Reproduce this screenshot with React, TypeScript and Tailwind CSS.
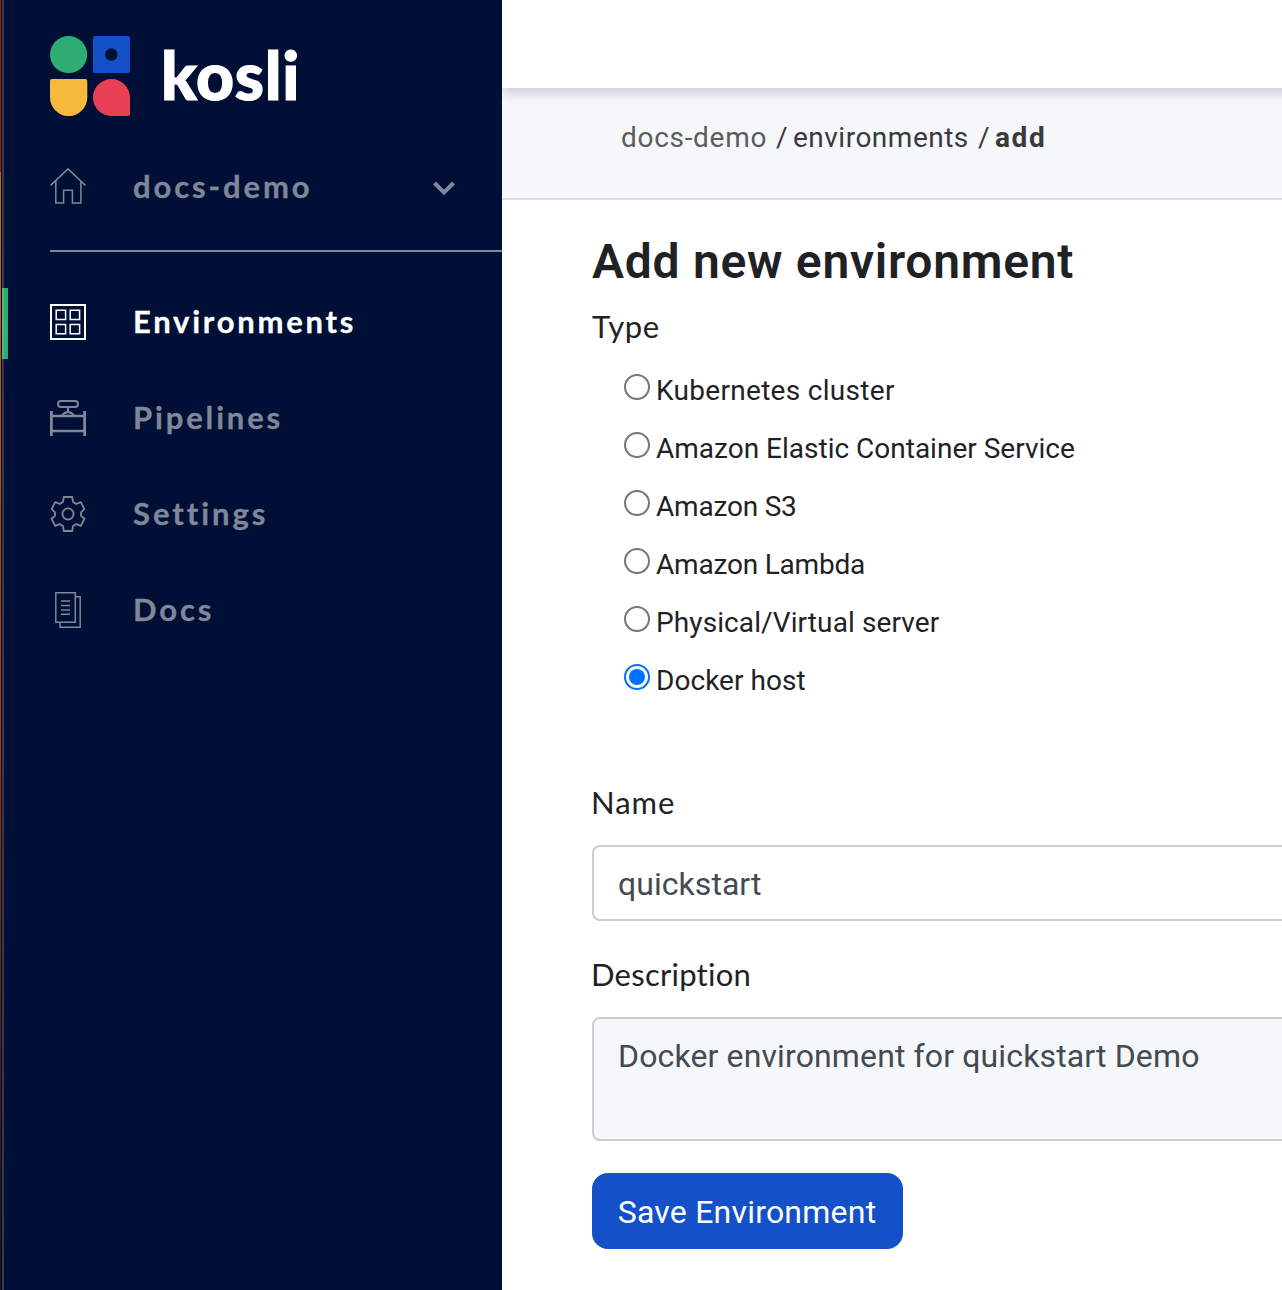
import type { ReactNode } from "react";

const gray = "#808799";

function Logo() {
  return (
    <svg width="80" height="80" viewBox="0 0 80 80" className="shrink-0">
      <circle cx="18.6" cy="18.6" r="18.6" fill="#2fab74" />
      <rect x="43" y="0" width="37" height="37" rx="2" fill="#1450c8" />
      <circle cx="61.3" cy="18.5" r="6.2" fill="#000f35" />
      <path d="M2 43H35.3Q37.3 43 37.3 45V61.4A18.65 18.65 0 0 1 0 61.4V45Q0 43 2 43Z" fill="#f6b93d" />
      <path d="M61.4 43A18.6 18.6 0 0 1 80 61.6V78Q80 80 78 80H61.4A18.5 18.5 0 0 1 61.4 43Z" fill="#e83f54" />
    </svg>
  );
}

function Icon({ children, color = gray, width = 1.5 }: { children: ReactNode; color?: string; width?: number }) {
  return (
    <svg width="36" height="36" viewBox="0 0 36 36" fill="none" stroke={color} strokeWidth={width} className="shrink-0">
      {children}
    </svg>
  );
}

const HomeIcon = () => (
  <Icon>
    <path d="M0.6 17.4L18 0.9L35.4 17.4" />
    <path d="M5.8 12.6V34.9H13.6V22.3H22.4V34.9H30.9V12.6" />
  </Icon>
);

const EnvironmentsIcon = () => (
  <Icon color="#ffffff">
    <path d="M1 1H35V35H1Z" strokeWidth="2" />
    <path d="M6.2 6.2H15.6V15.6H6.2ZM20.2 6.2H29.6V15.6H20.2ZM6.2 20.4H15.6V29.8H6.2ZM20.2 20.4H29.6V29.8H20.2Z" />
  </Icon>
);

const PipelinesIcon = () => (
  <Icon width={2}>
    <path d="M1.4 11V36M34.6 11V36" strokeWidth="2.8" />
    <path d="M2 16H34M2 31H34" strokeWidth="2.4" />
    <rect x="8" y="1" width="20" height="6" rx="3" />
    <path d="M18 7V12M11.5 16C13.5 13.5 15 12 18 12S22.5 13.5 24.5 16" />
  </Icon>
);

const SettingsIcon = () => (
  <Icon width={1.8}>
    <path
      d="M13.8 1H22.2L23 5.9L26.3 7.9L30.8 6.2L34.4 13.2L31 16.3V19.9L34.4 22.8L30.8 29.8L26.3 28.1L23 30.1L22.2 35H13.8L13 30.1L9.7 28.1L5.2 29.8L1.6 22.8L5 19.9V16.3L1.6 13.2L5.2 6.2L9.7 7.9L13 5.9Z"
      strokeLinejoin="round"
    />
    <circle cx="18" cy="18" r="5.6" />
  </Icon>
);

const DocsIcon = () => (
  <Icon>
    <path d="M5.8 0.8H25.3V30.2H5.8Z" />
    <path d="M25.3 4.8H30.2V35.2H10V30.2" />
    <path d="M11 9H20M11 13.5H20M11 18H20M11 22.3H20" />
  </Icon>
);

function NavItem({ icon, label, track, active }: { icon: ReactNode; label: string; track: string; active?: boolean }) {
  return (
    <a className={`relative flex h-[72px] items-center pl-[46px] ${active ? "text-white" : "text-[#808799]"}`}>
      {active && <span className="absolute top-0 -left-[2px] h-[71px] w-[6px] border-l-2 border-[#4eb88a] bg-[#2fab74]" />}
      <span className="mb-1">{icon}</span>
      <span className={`mb-[7px] ml-[47px] font-['Lato',sans-serif] text-[31px] leading-9 font-bold [-webkit-text-stroke:0.3px_currentColor] ${track}`}>
        {label}
      </span>
    </a>
  );
}

const types: [string, string][] = [
  ["Kubernetes cluster", "tracking-[0.3px]"],
  ["Amazon Elastic Container Service", "tracking-normal"],
  ["Amazon S3", "tracking-[-0.2px]"],
  ["Amazon Lambda", "tracking-[-0.2px]"],
  ["Physical/Virtual server", "tracking-[0.1px]"],
  ["Docker host", "tracking-[0.05px]"],
];

function Radio({ checked }: { checked: boolean }) {
  return (
    <span
      className={`mb-[7px] flex size-[26px] shrink-0 items-center justify-center rounded-full border-2 bg-white ${
        checked ? "border-[#0070ff]" : "border-[#767676]"
      }`}
    >
      {checked && <span className="size-4 rounded-full bg-[#0070ff]" />}
    </span>
  );
}

export default function App() {
  return (
    <div className="flex h-[1290px] w-[1282px] overflow-hidden bg-white font-['Roboto',sans-serif] text-[#1f2225]">
      <div className="flex w-1 shrink-0">
        <div className="flex w-px flex-col">
          <div className="h-[172px] bg-[#98280a]" />
          <div className="grow bg-linear-to-b from-[#b8701c] via-[#a83c0c] to-[#240c0c]" />
        </div>
        <div className="w-px bg-[#0a0a12]" />
        <div className="w-0.5 bg-[#2d3b5c]" />
      </div>
      <aside className="relative z-20 flex w-[498px] shrink-0 flex-col bg-[#000f35]">
        <div className="flex h-[152px] items-start pt-9 pl-[46px]">
          <Logo />
          <span className="-mt-px ml-[31px] font-['Lato',sans-serif] text-[66px] leading-[80px] font-black tracking-[0.7px] text-white [-webkit-text-stroke:1.2px_#ffffff]">
            kosli
          </span>
        </div>
        <div className="flex h-[98px] items-start pt-4 pr-[46px] pl-[46px] text-[#808799]">
          <HomeIcon />
          <span className="ml-[47px] grow font-['Lato',sans-serif] text-[31px] leading-9 font-bold tracking-[2.9px] [-webkit-text-stroke:0.3px_currentColor]">
            docs-demo
          </span>
          <svg width="24" height="36" viewBox="0 0 24 36" fill="none" stroke={gray} strokeWidth="4">
            <path d="M2.5 15L12 24.5L21.5 15" />
          </svg>
        </div>
        <div className="ml-[46px] h-0.5 bg-[#808799]" />
        <nav className="mt-9 flex flex-col gap-6">
          <NavItem icon={<EnvironmentsIcon />} label="Environments" track="tracking-[2.75px]" active />
          <NavItem icon={<PipelinesIcon />} label="Pipelines" track="tracking-[2.85px]" />
          <NavItem icon={<SettingsIcon />} label="Settings" track="tracking-[2.95px]" />
          <NavItem icon={<DocsIcon />} label="Docs" track="tracking-[2.85px]" />
        </nav>
      </aside>
      <main className="flex min-w-0 grow flex-col">
        <header className="relative z-10 h-[88px] w-[820px] shrink-0 bg-white shadow-[0_4px_12px_rgba(0,15,40,0.2)]" />
        <div className="flex h-28 shrink-0 items-start border-b-2 border-[#dcdfe3] bg-[#f6f7fb] pt-8 pl-[119px] text-[28px] leading-9 whitespace-pre text-[#3a3a3a]">
          <span className="w-[155px] tracking-[0.7px] text-[#5c5c5c]">docs-demo</span>
          <span className="w-[17px]">/</span>
          <span className="w-[185px] tracking-[0.5px]">environments</span>
          <span className="w-[17px]">/</span>
          <span className="font-bold tracking-[1.6px]">add</span>
        </div>
        <form className="flex flex-col items-start pl-[90px]">
          <h1 className="mt-8 text-[48px] leading-[60px] font-semibold tracking-[0.73px]">Add new environment</h1>
          <label className="mt-4 font-['Lato',sans-serif] text-[31px] leading-9 tracking-[0.6px]">Type</label>
          <div className="mt-[17px] ml-8 flex flex-col">
            {types.map(([name, track]) => (
              <label key={name} className="flex h-[58px] items-center">
                <Radio checked={name === "Docker host"} />
                <span className={`mt-0.5 ml-[6px] text-[28px] leading-9 whitespace-nowrap ${track}`}>{name}</span>
              </label>
            ))}
          </div>
          <label className="mt-[75px] -ml-px font-['Lato',sans-serif] text-[31px] leading-9 tracking-[1px]">Name</label>
          <div className="mt-[25px] flex h-[76px] w-[760px] items-center rounded-lg border-2 border-[#c8ced5] bg-white pt-0.5 pl-6 text-[32px] tracking-[0.05px] text-[#434a50]">
            quickstart
          </div>
          <label className="mt-[35px] -ml-px font-['Lato',sans-serif] text-[31px] leading-9 tracking-[0.25px]">Description</label>
          <div className="mt-[25px] h-[124px] w-[760px] rounded-lg border-2 border-[#c8ced5] bg-[#f6f7fb] pt-[13px] pl-6 text-[32px] leading-12 tracking-[0.13px] text-[#434a50]">
            Docker environment for quickstart Demo
          </div>
          <button
            type="button"
            className="mt-8 h-[76px] w-[311px] rounded-2xl bg-[#1450c8] pt-0.5 pr-px text-[32px] tracking-[0.22px] whitespace-nowrap text-white"
          >
            Save Environment
          </button>
        </form>
      </main>
    </div>
  );
}
